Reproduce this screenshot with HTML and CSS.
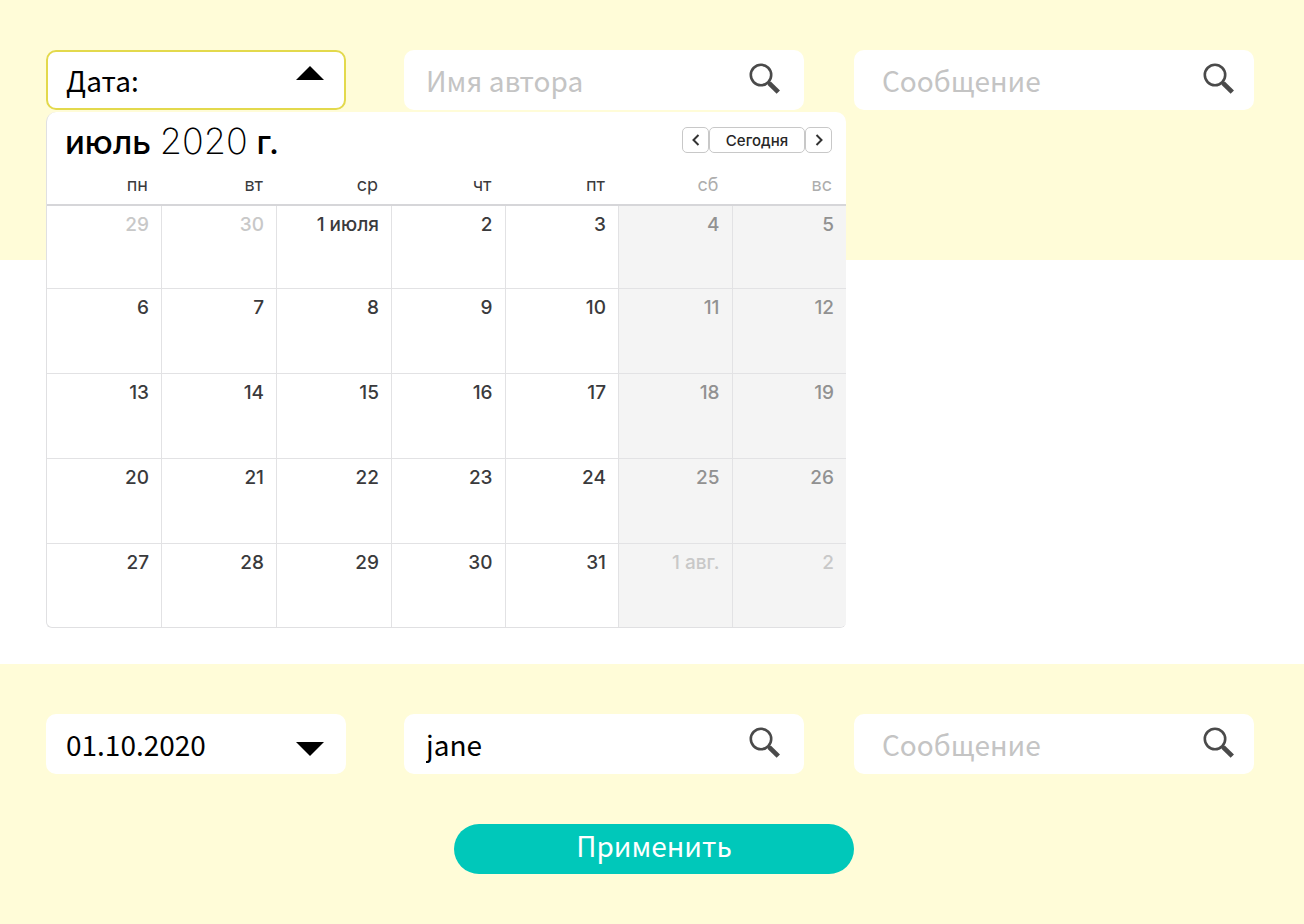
FILE: index.html
```html
<!DOCTYPE html>
<html lang="ru">
<head>
<meta charset="utf-8">
<meta name="viewport" content="width=device-width, initial-scale=1">
<title>Фильтры сообщений</title>
<link rel="stylesheet" href="styles.css">
</head>
<body>
<svg class="sprite" aria-hidden="true">
  <symbol id="search" viewBox="0 0 32 32">
    <circle cx="13" cy="12" r="10.2" fill="none" stroke="#4a4a4a" stroke-width="2.6"/>
    <path d="M19.9 18.9L21.5 20.5" stroke="#4a4a4a" stroke-width="2.5"/>
    <path d="M21.1 20.1L30.3 29.1" stroke="#4a4a4a" stroke-width="4.8"/>
  </symbol>
</svg>
<main class="page">
  <form class="filters filters-open">
    <div class="filters-row">
      <div class="date-field">
        <button class="field date-button active" type="button" aria-expanded="true" aria-controls="calendar">
          <span>Дата:</span>
          <svg class="arrow arrow-up" viewBox="0 0 28 14" aria-hidden="true"><path d="M0 14L14 0L28 14Z"/></svg>
        </button>
        <section class="calendar" id="calendar" aria-label="Календарь">
          <header class="calendar-header">
            <h2 class="calendar-title">июль <span class="year">2020</span> г.</h2>
            <div class="calendar-nav">
              <button class="nav-button nav-step" type="button" aria-label="Предыдущий месяц"><svg class="chevron" viewBox="0 0 8 12"><path d="M6.5 1L1.5 6L6.5 11"/></svg></button>
              <button class="nav-button nav-today" type="button">Сегодня</button>
              <button class="nav-button nav-step" type="button" aria-label="Следующий месяц"><svg class="chevron" viewBox="0 0 8 12"><path d="M1.5 1L6.5 6L1.5 11"/></svg></button>
            </div>
          </header>
          <table class="month">
            <colgroup><col class="wide" span="3"><col span="4"></colgroup>
            <thead>
              <tr><th>пн</th><th>вт</th><th>ср</th><th>чт</th><th>пт</th><th class="rest">сб</th><th class="rest">вс</th></tr>
            </thead>
            <tbody>
              <tr><td class="other">29</td><td class="other">30</td><td>1 июля</td><td>2</td><td>3</td><td class="weekend">4</td><td class="weekend">5</td></tr>
              <tr><td>6</td><td>7</td><td>8</td><td>9</td><td>10</td><td class="weekend">11</td><td class="weekend">12</td></tr>
              <tr><td>13</td><td>14</td><td>15</td><td>16</td><td>17</td><td class="weekend">18</td><td class="weekend">19</td></tr>
              <tr><td>20</td><td>21</td><td>22</td><td>23</td><td>24</td><td class="weekend">25</td><td class="weekend">26</td></tr>
              <tr><td>27</td><td>28</td><td>29</td><td>30</td><td>31</td><td class="weekend other">1 авг.</td><td class="weekend other">2</td></tr>
            </tbody>
          </table>
        </section>
      </div>
      <label class="field search-field">
        <input class="search-input" type="text" placeholder="Имя автора" aria-label="Имя автора">
        <svg class="search-icon" aria-hidden="true"><use href="#search"/></svg>
      </label>
      <label class="field search-field message">
        <input class="search-input" type="text" placeholder="Сообщение" aria-label="Сообщение">
        <svg class="search-icon" aria-hidden="true"><use href="#search"/></svg>
      </label>
    </div>
  </form>

  <form class="filters">
    <div class="filters-row">
      <div class="date-field">
        <button class="field date-button" type="button" aria-expanded="false">
          <span>01.10.2020</span>
          <svg class="arrow arrow-down" viewBox="0 0 28 14" aria-hidden="true"><path d="M0 0H28L14 14Z"/></svg>
        </button>
      </div>
      <label class="field search-field">
        <input class="search-input" type="text" value="jane" placeholder="Имя автора" aria-label="Имя автора">
        <svg class="search-icon" aria-hidden="true"><use href="#search"/></svg>
      </label>
      <label class="field search-field message">
        <input class="search-input" type="text" placeholder="Сообщение" aria-label="Сообщение">
        <svg class="search-icon" aria-hidden="true"><use href="#search"/></svg>
      </label>
    </div>
    <div class="actions">
      <button class="apply" type="submit">Применить</button>
    </div>
  </form>
</main>
</body>
</html>
```

FILE: styles.css
```css
* {
  box-sizing: border-box;
}

body {
  margin: 0;
  background: #fff;
  font-family: "Noto Sans CJK SC", "Open Sans", sans-serif;
  font-size: 28px;
  color: #000;
}

button,
input {
  margin: 0;
  font: inherit;
  color: inherit;
}

.sprite {
  display: none;
}

.page {
  display: flex;
  flex-direction: column;
  justify-content: space-between;
  min-height: 100vh;
}

.filters {
  padding: 50px 50px 50px 46px;
  background: #fffcd8;
}

.filters-open {
  padding-bottom: 150px;
}

.filters-row {
  display: grid;
  grid-template-columns: 308fr 400fr 400fr;
  gap: 50px;
}

.date-field {
  position: relative;
  margin-right: 8px;
}

.field {
  display: flex;
  height: 60px;
  background: #fff;
  border: 2px solid #fff;
  border-radius: 10px;
}

.date-button {
  align-items: center;
  justify-content: space-between;
  width: 100%;
  padding: 0 20px 0 18px;
  line-height: 56px;
}

.date-button.active {
  border-color: #e3d94c;
}

.arrow {
  width: 28px;
  height: 14px;
}

.arrow-up {
  margin-bottom: 14px;
}

.arrow-down {
  margin-top: 10px;
}

.search-field {
  min-width: 0;
  padding: 0 22px 0 16px;
}

.message {
  padding: 0 18px 0 22px;
}

.search-input {
  flex: 1;
  min-width: 0;
  height: 56px;
  padding: 0 4px;
  border: 0;
  outline: 0;
  background: transparent;
}

.search-input::placeholder {
  color: #c4c4c4;
  opacity: 1;
}

.search-icon {
  width: 32px;
  height: 32px;
  margin-top: 11px;
}

.calendar {
  position: absolute;
  z-index: 1;
  top: 62px;
  left: 0;
  width: 800px;
  overflow: hidden;
  border: 1px solid #e0e0e2;
  border-width: 0 0 1px 1px;
  border-radius: 10px 10px 6px 6px;
  background: #fff;
  font-family: Inter, sans-serif;
}

.calendar-header {
  display: flex;
  justify-content: space-between;
  height: 56px;
  padding: 0 14px 0 18px;
}

.calendar-title {
  margin: 0;
  font-size: 33px;
  font-weight: 500;
  line-height: 58px;
}

.year {
  font-size: 36px;
  font-weight: 200;
}

.calendar-nav {
  display: flex;
  padding-top: 15px;
}

.nav-button {
  display: flex;
  align-items: center;
  justify-content: center;
  height: 26px;
  padding: 0;
  border: 1px solid #c8c8c8;
  border-radius: 5px;
  background: #fff;
  color: #262626;
  font-size: 15px;
  font-weight: 500;
}

.nav-step {
  width: 27px;
}

.nav-today {
  width: 96px;
}

.chevron {
  width: 8px;
  height: 12px;
  fill: none;
  stroke: #333;
  stroke-width: 2;
}

.month {
  width: 100%;
  table-layout: fixed;
  border-collapse: separate;
  border-spacing: 0;
  font-size: 19px;
  color: #3a3a3c;
  text-align: right;
}

.month .wide {
  width: 115px;
}

.month th {
  height: 38px;
  padding: 0 14px 2px 0;
  border-bottom: 2px solid #d6d6d9;
  font-size: 18px;
  font-weight: 400;
  line-height: 34px;
}

.month td {
  height: 85px;
  padding: 0 12px 0 0;
  border-right: 1px solid #e2e2e4;
  border-bottom: 1px solid #e2e2e4;
  font-weight: 500;
  line-height: 38px;
  vertical-align: top;
}

.month tr > :last-child {
  border-right: 0;
}

.month tbody tr:first-child td,
.month tbody tr:last-child td {
  height: 83px;
}

.month tbody tr:last-child td {
  border-bottom: 0;
}

.month .rest {
  color: #adadad;
}

.month .weekend {
  background: #f4f4f4;
  color: #919191;
}

.month .other {
  color: #c8c8c8;
}

.actions {
  display: flex;
  justify-content: center;
  padding: 50px 0 0 8px;
}

.apply {
  width: 400px;
  height: 50px;
  padding: 0 0 8px;
  border: 0;
  border-radius: 25px;
  background: #00c8ba;
  color: #fff;
  line-height: 42px;
}
```
